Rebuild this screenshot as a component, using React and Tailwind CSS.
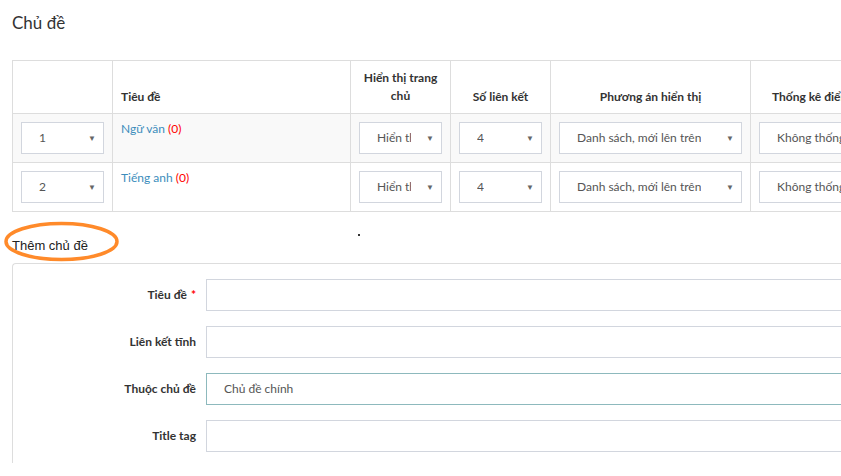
import React from "react";

const FakeSelect = ({ value, className = "" }) => (
  <div
    className={`relative flex h-[32px] items-center border border-[#d2d6de] bg-white pl-[17px] pr-[30px] text-[12px] text-[#555] ${className}`}
  >
    <span className="block overflow-hidden whitespace-nowrap">{value}</span>
    <span className="absolute right-[7px] top-[11px] text-[8px] leading-none text-[#666]">▼</span>
  </div>
);

const rows = [
  { order: "1", title: "Ngữ văn", bg: "bg-[#f9f9f9]" },
  { order: "2", title: "Tiếng anh", bg: "bg-white" },
];

const fields = [
  { label: "Tiêu đề", required: true },
  { label: "Liên kết tĩnh" },
  { label: "Thuộc chủ đề", value: "Chủ đề chính", focus: true },
  { label: "Title tag" },
];

export default function App() {
  return (
    <div
      className="relative h-[476px] w-[841px] overflow-hidden bg-white pl-[12px] text-[#333]"
      style={{ fontFamily: "Lato, 'Noto Sans', sans-serif" }}
    >
      <h1 className="pt-[12px] text-[17px] font-normal leading-[22px] text-[#333]">Chủ đề</h1>

      <table className="mt-[26px] w-[980px] table-fixed border-collapse border border-[#ddd] text-[12px]">
        <colgroup>
          <col className="w-[100px]" />
          <col className="w-[238px]" />
          <col className="w-[100px]" />
          <col className="w-[100px]" />
          <col className="w-[200px]" />
          <col className="w-[242px]" />
        </colgroup>
        <thead>
          <tr className="h-[53px]">
            <th className="border border-[#ddd] p-[8px] align-bottom"></th>
            <th className="border border-[#ddd] p-[8px] text-left align-bottom font-bold leading-[17px]">Tiêu đề</th>
            <th className="border border-[#ddd] px-[8px] pb-[8px] pt-[6px] align-bottom font-bold leading-[18px]">
              Hiển thị trang chủ
            </th>
            <th className="border border-[#ddd] p-[8px] align-bottom font-bold leading-[17px]">Số liên kết</th>
            <th className="border border-[#ddd] p-[8px] align-bottom font-bold leading-[17px]">Phương án hiển thị</th>
            <th className="border border-[#ddd] p-[8px] text-left align-bottom font-bold leading-[17px]">
              <span className="pl-[13px]">Thống kê điểm</span>
            </th>
          </tr>
        </thead>
        <tbody>
          {rows.map((r) => (
            <tr key={r.order} className={`h-[49px] ${r.bg}`}>
              <td className="border border-[#ddd] px-[8px] pb-[7px] pt-[8px] align-top">
                <FakeSelect value={r.order} className="w-[83px]" />
              </td>
              <td className="border border-[#ddd] px-[8px] pt-[6px] align-top leading-[17px]">
                <a className="text-[#3c8dbc]">{r.title}</a> <span className="text-[#f00]">(0)</span>
              </td>
              <td className="border border-[#ddd] px-[8px] pb-[7px] pt-[8px] align-top">
                <FakeSelect value="Hiển thị" className="w-[83px]" />
              </td>
              <td className="border border-[#ddd] px-[8px] pb-[7px] pt-[8px] align-top">
                <FakeSelect value="4" className="w-[83px]" />
              </td>
              <td className="border border-[#ddd] px-[8px] pb-[7px] pt-[8px] align-top">
                <FakeSelect value="Danh sách, mới lên trên" className="w-[183px]" />
              </td>
              <td className="border border-[#ddd] px-[8px] pb-[7px] pt-[8px] align-top">
                <FakeSelect value="Không thống kê" className="w-[200px]" />
              </td>
            </tr>
          ))}
        </tbody>
      </table>

      <div className="relative mt-[18px] h-[33px]">
        <span
          className="block pt-[7px] text-[13px] leading-[18px] text-[#222]"
          style={{ fontFamily: "'Liberation Sans', Arial, sans-serif" }}
        >
          Thêm chủ đề
        </span>
        <span className="absolute left-[346px] top-[4px] h-[2px] w-[2px] bg-[#333]"></span>
        <svg className="absolute left-[-9px] top-[-9px]" width="118" height="43" viewBox="0 0 118 43">
          <ellipse cx="58.5" cy="20.5" rx="55.5" ry="18" fill="none" stroke="#ff8a2a" strokeWidth="3.5" />
        </svg>
      </div>

      <div className="flex h-[200px] w-[900px] flex-col gap-[15px] rounded-tl-[4px] border-l border-t border-[#ddd] pt-[15px] text-[12px]">
        {fields.map((f) => (
          <div key={f.label} className="flex items-center">
            <label className="w-[193px] shrink-0 pr-[10px] text-right font-bold text-[#333]">
              {f.label}
              {f.required && <span className="ml-[4px] text-[#f00]">*</span>}
            </label>
            <div
              className={`flex h-[32px] flex-1 items-center border pl-[17px] text-[#555] ${
                f.focus ? "border-[#8db9bd]" : "border-[#d2d6de]"
              }`}
            >
              {f.value}
            </div>
          </div>
        ))}
      </div>
    </div>
  );
}
